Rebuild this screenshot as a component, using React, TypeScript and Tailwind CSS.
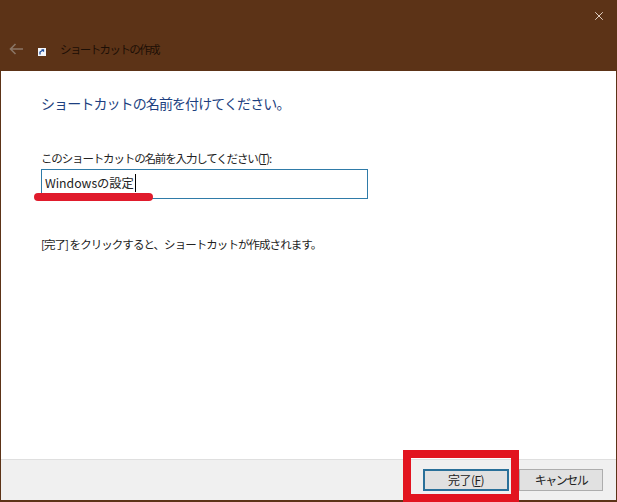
import { X } from "lucide-react";

const jp = "font-['Noto_Sans_CJK_JP','Noto_Sans',sans-serif]";

export default function App() {
  return (
    <div className={`relative flex h-[502px] w-[617px] flex-col overflow-hidden bg-[#5c3317] ${jp}`}>
      <header className="flex h-[71px] shrink-0 flex-col">
        <div className="flex h-[32px] justify-end pr-[11px] pt-[9px]">
          <X size={14} strokeWidth={1.5} className="text-[#f4e6da]" />
        </div>
        <div className="flex items-center pl-[9px] pt-[9px]">
          <svg width="15" height="12" viewBox="0 0 15 12" className="text-[#8a7565]">
            <path d="M1.5 6H14M6.5 1L1.5 6l5 5" fill="none" stroke="currentColor" strokeWidth="1.6" />
          </svg>
          <svg width="8" height="8" viewBox="0 0 8 8" className="ml-[14px] mt-[6px]">
            <rect width="8" height="8" fill="#f4f6fa" />
            <path d="M2 6.5V4l3-2M3.5 1.8h2v2" fill="none" stroke="#1d4c9a" strokeWidth="1.3" />
          </svg>
          <span className="ml-[14px] text-[11.5px] leading-[16px] tracking-[-1.6px] text-[#1c0f06]">ショートカットの作成</span>
        </div>
      </header>

      <main className="mx-px flex min-h-0 flex-1 flex-col bg-white pl-[40px] pt-[21px]">
        <h1 className="text-[14px] leading-[22px] font-normal tracking-[-0.9px] text-[#1d3f80]">ショートカットの名前を付けてください。</h1>
        <label className="mt-[35px] text-[11.5px] leading-[18px] tracking-[-1.15px] text-[#222]">
          このショートカットの名前を入力してください(<span className="underline">T</span>):
        </label>
        <div className="mt-[2px] flex h-[30px] w-[327px] items-center border border-[#2f7ba8] pb-[2px] pl-[3px] text-[12.25px] text-[#222]">
          <span>Windowsの設定</span>
          <span className="ml-px h-[18px] w-px bg-black" />
        </div>
        <p className="mt-[36px] text-[11.5px] leading-[18px] tracking-[-0.95px] text-[#222]">[完了] をクリックすると、ショートカットが作成されます。</p>
      </main>

      <footer className="mx-px mb-[2px] flex h-[41px] shrink-0 items-center justify-end gap-[10px] border-t border-[#dfdfdf] bg-[#f0f0f0] pr-[13px]">
        <button className="flex h-[22px] w-[86px] items-center justify-center border-2 border-[#2a7099] bg-[#e1e1e1] text-[12px] tracking-[-0.5px] text-[#222]">
          完了(<span className="underline">F</span>)
        </button>
        <button className="flex h-[22px] w-[84px] items-center justify-center border border-[#adadad] bg-[#e1e1e1] text-[12px] tracking-[-1.5px] text-[#222]">
          キャンセル
        </button>
      </footer>

      {/* annotations drawn over the screenshot */}
      <div className="absolute left-[34px] top-[193px] h-[8px] w-[119px] rounded-full bg-[#e01b2c]" />
      <div className="absolute left-[403px] top-[450px] h-[52px] w-[116px] border-[8px] border-[#e2141f]" />
    </div>
  );
}
